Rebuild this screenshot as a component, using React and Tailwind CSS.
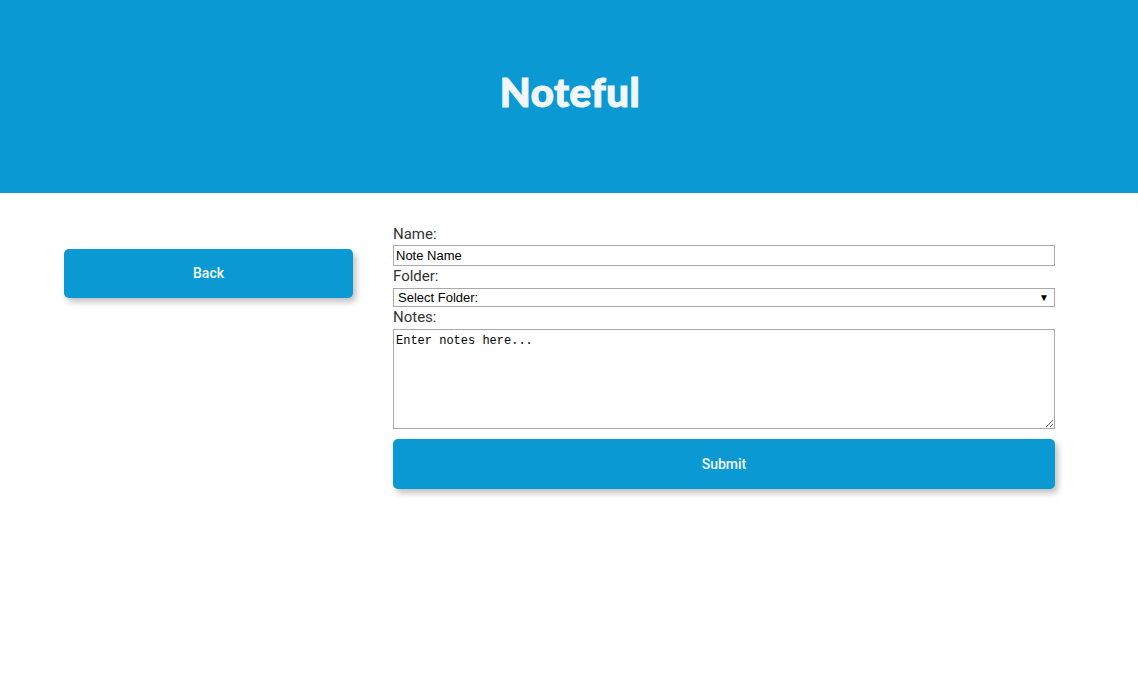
export default function App() {
  return (
    <div className="min-h-[690px] bg-white" style={{ fontFamily: "Roboto, 'Liberation Sans', sans-serif" }}>
      <header className="h-[193px] bg-[#0a99d3] flex items-center justify-center">
        <h1
          className="text-[40px] font-black text-[#f0f6fa] tracking-[0.6px] -mt-[10px] ml-[2px] [-webkit-text-stroke:1.2px_#f0f6fa]"
          style={{ fontFamily: "Lato, 'Noto Sans', sans-serif" }}
        >
          Noteful
        </h1>
      </header>
      <main className="flex gap-[40px] pl-[64px] pr-[83px] pt-[32px]">
        <aside className="w-[289px] shrink-0 pt-[24px]">
          <button className="w-full h-[49px] rounded-[5px] bg-[#0a99d3] text-[#f4f9fc] text-[14px] font-medium shadow-[3px_4px_6px_rgba(0,0,0,0.25)]">
            Back
          </button>
        </aside>
        <form className="flex-1 flex flex-col">
          <label className="block h-[20px] text-[15px] leading-[18px] text-[#333]">Name:</label>
          <input
            defaultValue="Note Name"
            className="block w-full h-[21px] border border-[#a9a9a9] px-[2px] text-[13px] text-black outline-none"
            style={{ fontFamily: "Arial, 'Liberation Sans', sans-serif" }}
          />
          <label className="block h-[22px] text-[15px] leading-[20px] text-[#333]">Folder:</label>
          <div className="relative h-[19px]">
            <select
              className="appearance-none block w-full h-[19px] border border-[#a9a9a9] pl-[4px] text-[13px] leading-[17px] text-black bg-white outline-none"
              style={{ fontFamily: "Arial, 'Liberation Sans', sans-serif" }}
            >
              <option>Select Folder:</option>
            </select>
            <span className="absolute right-[6px] top-[1px] text-[10px] leading-[17px] text-black pointer-events-none">▼</span>
          </div>
          <label className="block h-[22px] text-[15px] leading-[20px] text-[#333]">Notes:</label>
          <textarea
            defaultValue="Enter notes here..."
            className="block w-full h-[100px] border border-[#a9a9a9] px-[2px] pt-[2px] text-[12px] text-black outline-none resize"
            style={{ fontFamily: "'Liberation Mono', monospace" }}
          />
          <button
            type="button"
            className="mt-[10px] w-full h-[50px] rounded-[5px] bg-[#0a99d3] text-[#f4f9fc] text-[14px] font-medium shadow-[3px_4px_6px_rgba(0,0,0,0.25)]"
          >
            Submit
          </button>
        </form>
      </main>
    </div>
  );
}
